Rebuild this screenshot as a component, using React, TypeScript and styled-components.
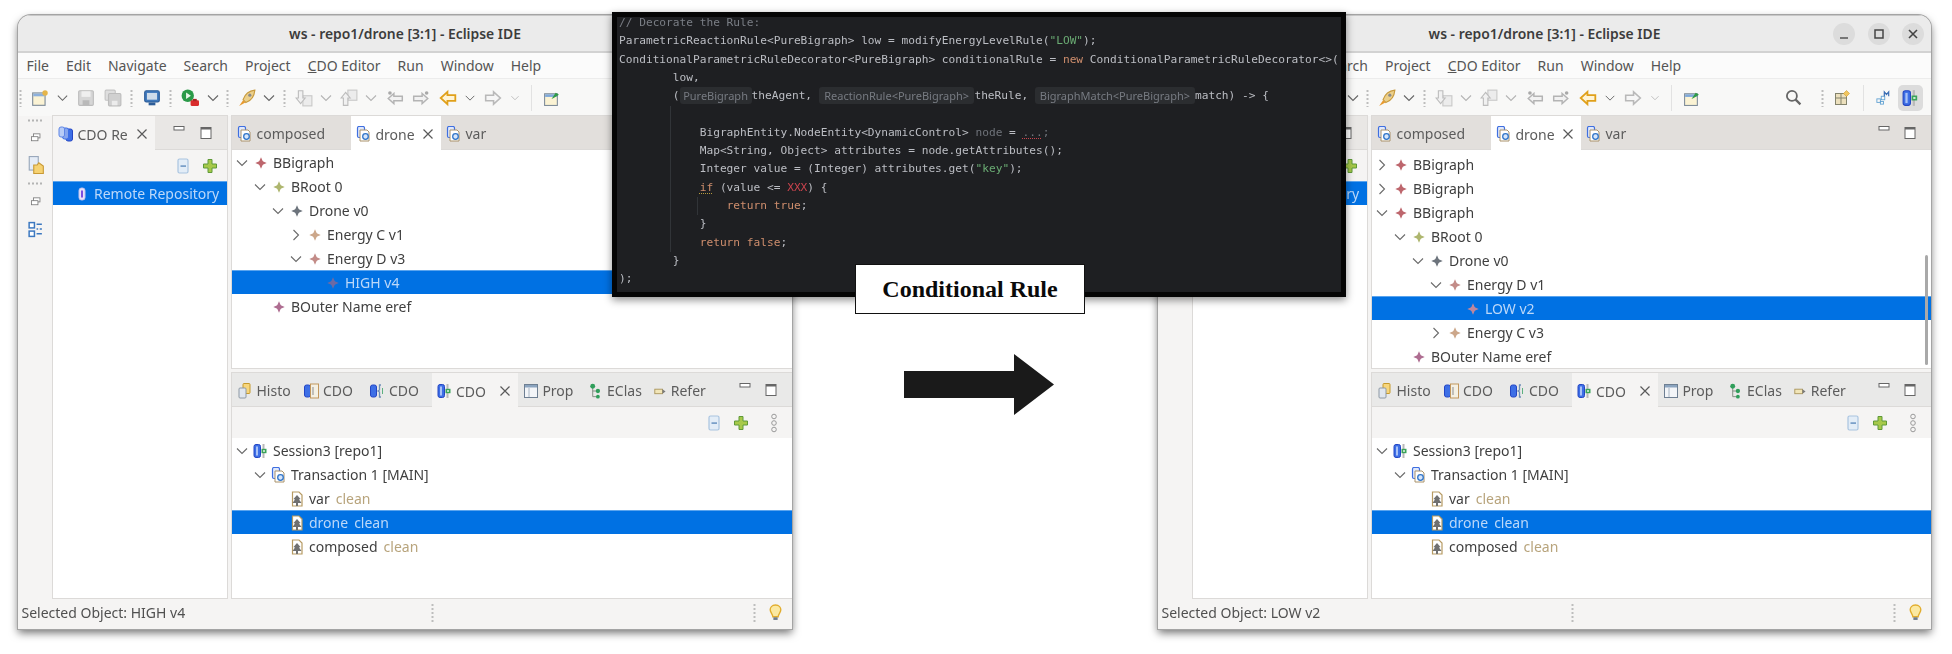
import React from 'react';
import styled, { createGlobalStyle } from 'styled-components';

const GlobalStyle = createGlobalStyle`
  html, body { margin: 0; padding: 0; background: #fff; }
  body { font-family: "Noto Sans", "Open Sans", sans-serif; }
  * { box-sizing: border-box; }
`;

const Stage = styled.div`
  position: relative;
  width: 1952px;
  height: 654px;
  overflow: hidden;
  display: flex;
  align-items: flex-start;
  padding: 15px 0 0 18px;
  background: #fff;
`;

const Window = styled.section<{ $w: number }>`
  flex: 0 0 ${(p) => p.$w}px;
  width: ${(p) => p.$w}px;
  height: 614px;
  display: flex;
  flex-direction: column;
  background: #f5f4f3;
  border-radius: 13px 13px 0 0;
  overflow: hidden;
  color: #444;
  font-size: 14px;
  filter: blur(0.45px);
  box-shadow: 0 0 0 1px #a4a4a4, 0 4px 9px rgba(0, 0, 0, 0.55);
`;

const TitleBar = styled.header`
  flex: 0 0 38px;
  display: grid;
  grid-template-columns: 1fr auto 1fr;
  align-items: center;
  background: #ebebeb;
  border-bottom: 2px solid #d2d2d2;
  border-top: 1px solid #c8c8c8;
`;

const Title = styled.div`
  grid-column: 2;
  font-weight: 600;
  font-size: 13.9px;
  color: #3c3c3c;
  white-space: nowrap;
`;

const WinButtons = styled.div`
  grid-column: 3;
  justify-self: end;
  display: flex;
  gap: 12.4px;
  padding-right: 7px;
`;

const WinButton = styled.span`
  width: 22px;
  height: 22px;
  border-radius: 50%;
  background: #dcdcdc;
  display: flex;
  align-items: center;
  justify-content: center;
`;

const MenuBar = styled.nav`
  flex: 0 0 26px;
  display: flex;
  align-items: center;
  gap: 17px;
  padding-left: 8.5px;
  background: #fbfbfb;
  border-bottom: 1px solid #ececec;
  color: #555;
  white-space: nowrap;
`;

const Mnemonic = styled.span`
  text-decoration: underline;
`;

const ToolBar = styled.div`
  flex: 0 0 37px;
  display: flex;
  align-items: center;
  background: #f8f8f7;
`;

const ToolSlot = styled.span<{ $w: number; $active?: boolean }>`
  flex: 0 0 ${(p) => p.$w}px;
  width: ${(p) => p.$w}px;
  height: 26px;
  display: flex;
  align-items: center;
  justify-content: center;
  border-radius: 5px;
  background: ${(p) => (p.$active ? '#dcdcdc' : 'transparent')};
`;

const ToolDivider = styled.span`
  width: 1px;
  height: 26px;
  background: #e2e2e2;
`;

const ToolSpacer = styled.span<{ $w: number }>`
  flex: 0 0 ${(p) => p.$w}px;
`;

const Workbench = styled.div`
  flex: 1;
  min-height: 0;
  display: flex;
`;

const TrimBar = styled.aside`
  flex: 0 0 35px;
  display: flex;
  flex-direction: column;
  align-items: center;
  padding-top: 1px;
`;

const TrimItem = styled.span<{ $h: number }>`
  flex: 0 0 ${(p) => p.$h}px;
  display: flex;
  align-items: center;
  justify-content: center;
`;

const ViewColumn = styled.div`
  flex: 0 0 173.5px;
  display: flex;
  margin-right: 5.5px;
`;

const Stack = styled.div<{ $h?: number }>`
  display: flex;
  flex-direction: column;
  flex: ${(p) => (p.$h ? `0 0 ${p.$h}px` : '1')};
  min-width: 0;
  min-height: 0;
  background: #fff;
  box-shadow: 0 0 0 1px #dcdad8;
`;

const EditorColumn = styled.div`
  flex: 1;
  min-width: 0;
  display: flex;
  flex-direction: column;
  gap: 5px;
`;

const TabBar = styled.div<{ $bg: string }>`
  flex: 0 0 34px;
  display: flex;
  background: ${(p) => p.$bg};
  border-bottom: 1px solid #dcdad8;
`;

const Tab = styled.div<{ $w: number; $bg?: string }>`
  flex: 0 0 ${(p) => p.$w}px;
  display: flex;
  align-items: center;
  padding: 2.5px 6px 0 5px;
  margin-bottom: ${(p) => (p.$bg ? '-1px' : '0')};
  background: ${(p) => p.$bg || 'transparent'};
  color: #5c5c5c;
  white-space: nowrap;
  overflow: hidden;
`;

const TabLabel = styled.span`
  margin-left: 3.5px;
`;

const TabClose = styled.span`
  margin-left: auto;
  display: flex;
`;

const ViewControls = styled.div`
  margin-left: auto;
  display: flex;
  align-items: center;
  gap: 10.5px;
  padding-right: 13px;
`;

const ViewToolBar = styled.div`
  flex: 0 0 31px;
  display: flex;
  align-items: center;
  justify-content: flex-end;
  background: #f5f4f3;
`;

const ViewTool = styled.span<{ $w: number }>`
  flex: 0 0 ${(p) => p.$w}px;
  display: flex;
  justify-content: center;
`;

const Tree = styled.div<{ $top: number }>`
  position: relative;
  flex: 1;
  min-height: 0;
  padding-top: ${(p) => p.$top}px;
  background: #fff;
  overflow: hidden;
`;

const Row = styled.div<{ $level: number; $selected?: boolean }>`
  height: 24px;
  display: flex;
  align-items: center;
  padding-left: ${(p) => 2 + p.$level * 18}px;
  white-space: nowrap;
  color: ${(p) => (p.$selected ? '#bcd8f9' : '#3f3f3f')};
  background: ${(p) => (p.$selected ? '#0071e3' : 'transparent')};
  border-top: 1px solid ${(p) => (p.$selected ? '#5aa4ee' : 'transparent')};
`;

const ChevronSlot = styled.span`
  flex: 0 0 16px;
  display: flex;
  justify-content: center;
`;

const IconSlot = styled.span`
  flex: 0 0 16px;
  margin-left: 3px;
  display: flex;
  justify-content: center;
  align-items: center;
`;

const RowLabel = styled.span`
  margin-left: 4px;
`;

const Dirty = styled.span<{ $selected?: boolean }>`
  margin-left: 6px;
  color: ${(p) => (p.$selected ? '#bcd8f9' : '#b8a47c')};
`;

const ScrollThumb = styled.span`
  position: absolute;
  top: 105px;
  right: 3px;
  bottom: 3px;
  width: 3px;
  border-radius: 2px;
  background: #a9a9a9;
`;

const StatusBar = styled.footer`
  flex: 0 0 31px;
  display: flex;
  align-items: center;
  padding: 0 0 2px 3.5px;
  color: #505050;
`;

const StatusText = styled.span`
  flex: 0 0 409px;
  white-space: nowrap;
`;

const StatusGap = styled.span<{ $w: number }>`
  flex: 0 0 ${(p) => p.$w}px;
`;

const Middle = styled.div`
  flex: 0 0 366px;
  padding: 339px 0 0 112px;
`;

const ArrowMark = styled.svg`
  display: block;
`;

const CodeBox = styled.div`
  position: absolute;
  left: 612px;
  top: 12px;
  width: 734px;
  height: 285px;
  background: #1e1f22;
  border: 5px solid #050505;
  padding-left: 2px;
  overflow: hidden;
  box-shadow: 0 3px 8px rgba(0, 0, 0, 0.45);
  font-family: "DejaVu Sans Mono", "Liberation Mono", monospace;
  font-size: 11.18px;
  color: #bcbec4;
`;

const CodeBody = styled.div`
  margin-top: -3px;
  filter: blur(0.4px);
`;

const CodeLine = styled.div`
  height: 18.3px;
  line-height: 18.3px;
  white-space: pre;
`;

const Comment = styled.span`
  color: #7a7e85;
`;

const Str = styled.span`
  color: #6aab73;
`;

const Keyword = styled.span`
  color: #cf8e6d;
`;

const Wrong = styled.span`
  color: #c9434d;
`;

const Muted = styled.span`
  color: #6f737a;
`;

const Squiggle = styled.span<{ $color: string }>`
  text-decoration: underline dotted ${(p) => p.$color};
  text-underline-offset: 2px;
`;

const InlayHint = styled.span<{ $w: number }>`
  display: inline-block;
  width: ${(p) => p.$w}px;
  height: 17px;
  line-height: 17px;
  text-align: center;
  vertical-align: top;
  border-radius: 3px;
  background: #2b2d30;
  color: #777b82;
  font-family: "Noto Sans", sans-serif;
  font-size: 11px;
`;

const IndentGuide = styled.span<{ $left: number; $top: number; $h: number }>`
  position: absolute;
  left: ${(p) => p.$left}px;
  top: ${(p) => p.$top}px;
  width: 1px;
  height: ${(p) => p.$h}px;
  background: #313438;
`;

const RuleLabel = styled.div`
  position: absolute;
  left: 855px;
  top: 264px;
  width: 230px;
  height: 50px;
  display: flex;
  align-items: center;
  justify-content: center;
  background: #fff;
  border: 1px solid #111;
  font-family: "Liberation Serif", "Times New Roman", serif;
  font-weight: 700;
  font-size: 24px;
  color: #0a0a0a;
`;

type IconName =
  | 'new' | 'save' | 'saveAll' | 'monitor' | 'run' | 'rocket' | 'annotDown' | 'annotUp'
  | 'prevEdit' | 'nextEdit' | 'back' | 'forward' | 'newWin' | 'search' | 'persp' | 'model'
  | 'session' | 'tx' | 'histo' | 'cdoDoc' | 'cdoBrace' | 'prop' | 'eclass' | 'refer'
  | 'repos' | 'repo' | 'resource' | 'collapse' | 'plus' | 'bulb' | 'restore' | 'folderDoc' | 'outline';

const IconArt: React.FC<{ name: IconName }> = ({ name }) => {
  switch (name) {
    case 'new':
      return (
        <>
          <rect x="1.5" y="3.5" width="11" height="11" fill="#fbf3d4" stroke="#7d8b99" />
          <rect x="2" y="4" width="10" height="2.5" fill="#8db0dc" />
          <circle cx="12.5" cy="3.5" r="2.4" fill="#e5b548" />
        </>
      );
    case 'save':
      return (
        <>
          <rect x="1.5" y="1.5" width="13" height="13" rx="1" fill="#d6d6d6" stroke="#bcbcbc" />
          <rect x="4" y="2" width="8" height="5" fill="#efefef" />
          <rect x="5" y="10" width="6" height="4.5" fill="#b9b9b9" />
        </>
      );
    case 'saveAll':
      return (
        <>
          <rect x="1" y="1" width="9" height="9" rx="1" fill="#dedede" stroke="#c4c4c4" />
          <rect x="4" y="4" width="11" height="11" rx="1" fill="#d0d0d0" stroke="#bcbcbc" />
          <rect x="7" y="10.5" width="5" height="4" fill="#ececec" />
        </>
      );
    case 'monitor':
      return (
        <>
          <rect x="1.5" y="1.5" width="13" height="10" rx="1.5" fill="#3f78bb" stroke="#2d5d98" />
          <rect x="3.5" y="3.5" width="9" height="6" fill="#cfdcea" />
          <rect x="5" y="12" width="6" height="2.5" fill="#2d5d98" />
        </>
      );
    case 'run':
      return (
        <>
          <circle cx="6" cy="6" r="5.5" fill="#2b9a48" />
          <path d="M4.5 3.2 L8.8 6 L4.5 8.8Z" fill="#e9f7e9" />
          <rect x="8.5" y="10" width="7.5" height="5" rx="1" fill="#d92c2c" />
          <rect x="10.5" y="8.8" width="3.5" height="2" fill="#a92424" />
        </>
      );
    case 'rocket':
      return (
        <>
          <path d="M15 1 C10 1.5 6 5 4.5 9.5 L7 12 C11.5 10.5 14.5 6 15 1Z" fill="#ecd08b" stroke="#c89b3e" />
          <circle cx="10.5" cy="5.5" r="1.4" fill="#8b8b8b" />
          <path d="M4.5 10 L1 15 L6.5 12Z" fill="#e79a2f" />
        </>
      );
    case 'annotDown':
      return (
        <>
          <rect x="7" y="6" width="8" height="9" fill="#ececec" stroke="#c9c9c9" />
          <path d="M3 1.5 H7 V8 H9 L5 13 L1 8 H3Z" fill="#f1f1f1" stroke="#bdbdbd" />
        </>
      );
    case 'annotUp':
      return (
        <>
          <rect x="7" y="1" width="8" height="9" fill="#ececec" stroke="#c9c9c9" />
          <path d="M5 3 L9 8 H7 V14.5 H3 V8 H1Z" fill="#f1f1f1" stroke="#bdbdbd" />
        </>
      );
    case 'prevEdit':
      return (
        <>
          <path d="M7 4 L2 8.5 L7 13 V10.5 H14.5 V6.5 H7Z" fill="#f2f2f2" stroke="#b4b4b4" strokeWidth="1.3" />
          <circle cx="3.5" cy="3.5" r="1.6" fill="#a9a9a9" />
        </>
      );
    case 'nextEdit':
      return (
        <>
          <path d="M9 4 L14 8.5 L9 13 V10.5 H1.5 V6.5 H9Z" fill="#f2f2f2" stroke="#b4b4b4" strokeWidth="1.3" />
          <circle cx="13" cy="3.5" r="1.6" fill="#a9a9a9" />
        </>
      );
    case 'back':
      return <path d="M7.5 2.5 L1.5 8 L7.5 13.5 V10.5 H14.5 V5.5 H7.5Z" fill="#fff4d6" stroke="#e0a01a" strokeWidth="1.6" />;
    case 'forward':
      return <path d="M8.5 2.5 L14.5 8 L8.5 13.5 V10.5 H1.5 V5.5 H8.5Z" fill="#f6f6f6" stroke="#b9b9b9" strokeWidth="1.4" />;
    case 'newWin':
      return (
        <>
          <rect x="1.5" y="4" width="12" height="11" fill="#fbf3d4" stroke="#7d8b99" />
          <rect x="2" y="4.5" width="11" height="2.5" fill="#7fa8da" />
          <path d="M8 9 L12 3 L15 5 L10 8Z" fill="#2f9a46" />
        </>
      );
    case 'search':
      return (
        <>
          <circle cx="6.5" cy="6.5" r="4.7" fill="none" stroke="#666" strokeWidth="1.7" />
          <path d="M10 10 L14.5 14.5" stroke="#666" strokeWidth="2.1" />
        </>
      );
    case 'persp':
      return (
        <>
          <rect x="1.5" y="3.5" width="11" height="11" fill="#ece0bd" stroke="#83836c" />
          <path d="M1.5 8 H12.5 M7 3.5 V14.5" stroke="#83836c" />
          <path d="M12.5 0.5 L15.5 3.5 L12.5 6.5 L9.5 3.5Z" fill="#f1c65e" stroke="#cf9c2e" strokeWidth="0.6" />
        </>
      );
    case 'model':
      return (
        <>
          <rect x="1" y="9" width="4" height="4" fill="none" stroke="#5ea0d2" />
          <rect x="5" y="12" width="3.5" height="3" fill="none" stroke="#5ea0d2" />
          <rect x="6" y="6" width="4" height="4" fill="none" stroke="#5ea0d2" />
          <path d="M9.5 6 V1 L12 4 L14.5 1 V6" fill="none" stroke="#3c6fb5" strokeWidth="1.4" />
        </>
      );
    case 'session':
      return (
        <>
          <rect x="1" y="1.5" width="6.5" height="13" rx="2" fill="#3d6fe6" stroke="#2446c4" />
          <rect x="3" y="3.5" width="2" height="9" fill="#a9c2f7" />
          <rect x="9.5" y="1" width="2" height="14" fill="#b9b9b9" />
          <rect x="8.5" y="5.8" width="5" height="4.4" fill="#3aa35a" />
          <rect x="10" y="7.2" width="2" height="1.6" fill="#d8f0dc" />
        </>
      );
    case 'tx':
      return (
        <>
          <rect x="1.5" y="0.5" width="7" height="11" rx="1.5" fill="#dfe8fb" stroke="#3f6fe0" strokeWidth="1.2" />
          <path d="M4 4 H11 L13 6 V15 H4Z" fill="#fff" stroke="#a9926a" />
          <circle cx="9.5" cy="10.5" r="2.8" fill="#d5e5fb" stroke="#2f74c8" strokeWidth="1.3" />
        </>
      );
    case 'histo':
      return (
        <>
          <rect x="6" y="0.5" width="7" height="10" rx="1" fill="#f7d67c" stroke="#c69a2c" />
          <rect x="2" y="5" width="7" height="10" rx="1" fill="#e1e7ee" stroke="#8d98a5" />
        </>
      );
    case 'cdoDoc':
      return (
        <>
          <rect x="0.5" y="2" width="6" height="12" rx="2" fill="#3d6fe6" stroke="#2446c4" />
          <rect x="6.5" y="1" width="8" height="14" fill="#f4f0e4" stroke="#c2975c" />
          <path d="M9 4 V12" stroke="#8d8d8d" />
        </>
      );
    case 'cdoBrace':
      return (
        <>
          <rect x="0.5" y="2" width="6" height="12" rx="2" fill="#3d6fe6" stroke="#2446c4" />
          <path d="M11 2 H9.5 V7 L8 8 L9.5 9 V14 H11" fill="none" stroke="#6f8fb8" strokeWidth="1.3" />
          <path d="M12.5 5 V11" stroke="#5db080" />
        </>
      );
    case 'prop':
      return (
        <>
          <rect x="1.5" y="1.5" width="13" height="13" fill="#f3f5f8" stroke="#6e7f92" />
          <rect x="2" y="2" width="12" height="2.5" fill="#8ba4bf" />
          <path d="M6 5 V14" stroke="#a9b6c4" />
        </>
      );
    case 'eclass':
      return (
        <>
          <path d="M5 2 V14 H10 M5 8 H10" fill="none" stroke="#7f8b7f" />
          <circle cx="5" cy="3" r="2.6" fill="#2f9e5a" />
          <circle cx="10.5" cy="8" r="2.3" fill="#2f9e5a" />
          <circle cx="10.5" cy="14" r="2" fill="#2f9e5a" />
        </>
      );
    case 'refer':
      return (
        <>
          <rect x="2" y="6" width="8.5" height="5" fill="#f2e6b8" stroke="#a9945a" />
          <path d="M10.5 6 L14 8.5 L10.5 11Z" fill="#7b7b7b" />
        </>
      );
    case 'repos':
      return (
        <>
          <rect x="8" y="3" width="6.5" height="12" rx="2" fill="#3d6fe6" stroke="#2446c4" />
          <rect x="4.5" y="2" width="6" height="11" rx="2" fill="#86a5ee" stroke="#3d6fe6" />
          <rect x="1" y="1" width="5.5" height="10" rx="2" fill="#b8ccf6" stroke="#5d85e6" />
        </>
      );
    case 'repo':
      return (
        <>
          <rect x="5" y="2" width="6" height="12" rx="2.5" fill="#e8e2f9" stroke="#c3c3ef" />
          <rect x="7" y="4.5" width="2" height="7" fill="#7b4fe0" />
        </>
      );
    case 'resource':
      return (
        <>
          <path d="M3.5 1 H10 L13 4 V15 H3.5Z" fill="#fff" stroke="#b69a62" strokeWidth="1.2" />
          <path d="M8 4 L11.5 8 L10 8.5 L12.5 12 H3.5 L6 8.5 L4.5 8Z" fill="#707070" />
          <rect x="7" y="12" width="2" height="3" fill="#707070" />
        </>
      );
    case 'collapse':
      return (
        <>
          <rect x="3" y="1" width="10" height="14" rx="1.5" fill="#e3edf7" stroke="#a9c4e0" strokeWidth="1.2" />
          <rect x="5.5" y="7.3" width="5.5" height="1.6" fill="#6f97c4" />
        </>
      );
    case 'plus':
      return <path d="M6 1.5 H10 V6 H14.5 V10 H10 V14.5 H6 V10 H1.5 V6 H6Z" fill="#a7c94a" stroke="#5f9a38" />;
    case 'bulb':
      return (
        <>
          <path d="M8 1 C4.5 1 3 3.5 3 5.5 C3 8 5.5 9.5 5.5 12 H10.5 C10.5 9.5 13 8 13 5.5 C13 3.5 11.5 1 8 1Z" fill="#fbe9a2" stroke="#e2ad2e" strokeWidth="1.3" />
          <rect x="6" y="12.5" width="4" height="2.5" fill="#6f7c8c" />
        </>
      );
    case 'restore':
      return (
        <>
          <rect x="5.5" y="3.5" width="8" height="5" fill="#fff" stroke="#777" />
          <rect x="3" y="7" width="8" height="5" fill="#fff" stroke="#777" />
        </>
      );
    case 'folderDoc':
      return (
        <>
          <rect x="2" y="0.5" width="8" height="12" fill="#e5ecf6" stroke="#9aa8bb" />
          <path d="M6 8 H9 L10.5 6 L14.5 9 V15.5 H6Z" fill="#f6d272" stroke="#c99a36" />
        </>
      );
    case 'outline':
      return (
        <>
          <rect x="2" y="1.5" width="5" height="5" fill="#fff" stroke="#3c78c0" strokeWidth="1.4" />
          <rect x="2" y="9.5" width="5" height="5" fill="#fff" stroke="#3c78c0" strokeWidth="1.4" />
          <path d="M9 3 H14 M9 7.5 H10.5 M12 7.5 H14 M9 12 H14" stroke="#3c78c0" strokeWidth="1.4" />
        </>
      );
    default:
      return null;
  }
};

const Icon: React.FC<{ name: IconName; size?: number }> = ({ name, size = 16 }) => (
  <svg width={size} height={size} viewBox="0 0 16 16">
    <IconArt name={name} />
  </svg>
);

const Node: React.FC<{ color: string }> = ({ color }) => (
  <svg width="14" height="14" viewBox="0 0 16 16" opacity="0.88">
    <path d="M8 1.5 L10 6 L14.5 8 L10 10 L8 14.5 L6 10 L1.5 8 L6 6Z" fill={color} />
    <circle cx="8" cy="8" r="2.6" fill={color} />
  </svg>
);

const Chevron: React.FC<{ dir: 'down' | 'right'; color?: string }> = ({ dir, color = '#6a6a6a' }) => (
  <svg width="14" height="14" viewBox="0 0 14 14">
    <path d={dir === 'down' ? 'M2 4.5 L7 9.5 L12 4.5' : 'M4.5 2 L9.5 7 L4.5 12'} fill="none" stroke={color} strokeWidth="1.1" />
  </svg>
);

const CloseX: React.FC = () => (
  <svg width="14" height="14" viewBox="0 0 14 14">
    <path d="M2.5 2.5 L11.5 11.5 M11.5 2.5 L2.5 11.5" stroke="#5a5a5a" strokeWidth="1.2" />
  </svg>
);

const MinMark: React.FC = () => (
  <svg width="16" height="16" viewBox="0 0 16 16">
    <rect x="3" y="1.5" width="10" height="3.5" fill="#fff" stroke="#666" />
  </svg>
);

const MaxMark: React.FC = () => (
  <svg width="16" height="16" viewBox="0 0 16 16">
    <rect x="3" y="2.5" width="10" height="11" fill="#fff" stroke="#666" />
    <rect x="3" y="2.5" width="10" height="2" fill="#666" />
  </svg>
);

const Grip: React.FC<{ tall?: boolean }> = ({ tall }) => (
  <svg width="3" height={tall ? 20 : 18} viewBox={`0 0 3 ${tall ? 20 : 18}`}>
    {[1, 5, 9, 13, 17].map((y) => (
      <rect key={y} x="0.5" y={y} width="2" height="2" fill="#bdbdbd" />
    ))}
  </svg>
);

const TrimGrip: React.FC = () => (
  <svg width="18" height="3" viewBox="0 0 18 3">
    {[1, 5, 9, 13].map((x) => (
      <rect key={x} x={x} y="0.5" width="2" height="2" fill="#b4b4b4" />
    ))}
  </svg>
);

const ChainDots: React.FC = () => (
  <svg width="8" height="20" viewBox="0 0 8 20">
    {[3.5, 10, 16.5].map((y) => (
      <circle key={y} cx="4" cy={y} r="2.3" fill="none" stroke="#9a9a9a" />
    ))}
  </svg>
);

type ToolItem = { w: number; icon?: IconName; chevron?: boolean; dark?: boolean; grip?: boolean; divider?: boolean };

const toolItems: ToolItem[] = [
  { w: 5, grip: true },
  { w: 33, icon: 'new' },
  { w: 13, chevron: true, dark: true },
  { w: 34, icon: 'save' },
  { w: 20, icon: 'saveAll' },
  { w: 17, grip: true },
  { w: 24, icon: 'monitor' },
  { w: 12, grip: true },
  { w: 28, icon: 'run' },
  { w: 17, chevron: true, dark: true },
  { w: 12, grip: true },
  { w: 28, icon: 'rocket' },
  { w: 16, chevron: true, dark: true },
  { w: 14, grip: true },
  { w: 26, icon: 'annotDown' },
  { w: 18, chevron: true },
  { w: 28, icon: 'annotUp' },
  { w: 16, chevron: true },
  { w: 31, icon: 'prevEdit' },
  { w: 22, icon: 'nextEdit' },
  { w: 32, icon: 'back' },
  { w: 12, chevron: true, dark: true },
  { w: 34, icon: 'forward' },
  { w: 10, chevron: true },
  { w: 23, divider: true },
  { w: 17, icon: 'newWin' },
];

type TreeEntry = {
  label: string;
  level: number;
  chevron?: 'down' | 'right';
  color?: string;
  icon?: IconName;
  dirty?: boolean;
  selected?: boolean;
};

const BIGRAPH = '#b5525a';
const ROOT = '#a3ad5c';
const DRONE = '#59616b';
const ENERGY_C = '#c59b7b';
const ENERGY_D = '#bb7d78';
const OUTER = '#a35a82';
const VALUE = '#d88a94';

const leftTree: TreeEntry[] = [
  { label: 'BBigraph', level: 0, chevron: 'down', color: BIGRAPH },
  { label: 'BRoot 0', level: 1, chevron: 'down', color: ROOT },
  { label: 'Drone v0', level: 2, chevron: 'down', color: DRONE },
  { label: 'Energy C v1', level: 3, chevron: 'right', color: ENERGY_C },
  { label: 'Energy D v3', level: 3, chevron: 'down', color: ENERGY_D },
  { label: 'HIGH v4', level: 4, color: '#7d6a9c', selected: true },
  { label: 'BOuter Name eref', level: 1, color: OUTER },
];

const rightTree: TreeEntry[] = [
  { label: 'BBigraph', level: 0, chevron: 'right', color: BIGRAPH },
  { label: 'BBigraph', level: 0, chevron: 'right', color: BIGRAPH },
  { label: 'BBigraph', level: 0, chevron: 'down', color: BIGRAPH },
  { label: 'BRoot 0', level: 1, chevron: 'down', color: ROOT },
  { label: 'Drone v0', level: 2, chevron: 'down', color: DRONE },
  { label: 'Energy D v1', level: 3, chevron: 'down', color: ENERGY_D },
  { label: 'LOW v2', level: 4, color: VALUE, selected: true },
  { label: 'Energy C v3', level: 3, chevron: 'right', color: ENERGY_C },
  { label: 'BOuter Name eref', level: 1, color: OUTER },
];

const sessionTree: TreeEntry[] = [
  { label: 'Session3 [repo1]', level: 0, chevron: 'down', icon: 'session' },
  { label: 'Transaction 1 [MAIN]', level: 1, chevron: 'down', icon: 'tx' },
  { label: 'var', level: 2, icon: 'resource', dirty: true },
  { label: 'drone', level: 2, icon: 'resource', dirty: true, selected: true },
  { label: 'composed', level: 2, icon: 'resource', dirty: true },
];

const bottomTabs: { label: string; icon: IconName; w: number; active?: boolean }[] = [
  { label: 'Histo', icon: 'histo', w: 66.5 },
  { label: 'CDO', icon: 'cdoDoc', w: 66 },
  { label: 'CDO', icon: 'cdoBrace', w: 67 },
  { label: 'CDO', icon: 'session', w: 86.4, active: true },
  { label: 'Prop', icon: 'prop', w: 65.6 },
  { label: 'EClas', icon: 'eclass', w: 64.4 },
  { label: 'Refer', icon: 'refer', w: 64 },
];

const TreeRows: React.FC<{ rows: TreeEntry[] }> = ({ rows }) => (
  <>
    {rows.map((row, i) => (
      <Row key={i} $level={row.level} $selected={row.selected}>
        <ChevronSlot>{row.chevron && <Chevron dir={row.chevron} />}</ChevronSlot>
        <IconSlot>{row.icon ? <Icon name={row.icon} /> : <Node color={row.color || DRONE} />}</IconSlot>
        <RowLabel>{row.label}</RowLabel>
        {row.dirty && <Dirty $selected={row.selected}>clean</Dirty>}
      </Row>
    ))}
  </>
);

const EclipseWindow: React.FC<{
  w: number;
  tree: TreeEntry[];
  treeTop: number;
  status: string;
  scrolled?: boolean;
}> = ({ w, tree, treeTop, status, scrolled }) => (
  <Window $w={w}>
    <TitleBar>
      <Title>ws - repo1/drone [3:1] - Eclipse IDE</Title>
      <WinButtons>
        <WinButton>
          <svg width="12" height="12" viewBox="0 0 12 12">
            <path d="M2 10 H10" stroke="#555" strokeWidth="1.6" />
          </svg>
        </WinButton>
        <WinButton>
          <svg width="12" height="12" viewBox="0 0 12 12">
            <rect x="2" y="2" width="8" height="8" fill="none" stroke="#444" strokeWidth="1.5" />
          </svg>
        </WinButton>
        <WinButton>
          <svg width="12" height="12" viewBox="0 0 12 12">
            <path d="M2 2 L10 10 M10 2 L2 10" stroke="#444" strokeWidth="1.6" />
          </svg>
        </WinButton>
      </WinButtons>
    </TitleBar>
    <MenuBar>
      <span>File</span>
      <span>Edit</span>
      <span>Navigate</span>
      <span>Search</span>
      <span>Project</span>
      <span>
        <Mnemonic>C</Mnemonic>DO Editor
      </span>
      <span>Run</span>
      <span>Window</span>
      <span>Help</span>
    </MenuBar>
    <ToolBar>
      {toolItems.map((item, i) => (
        <ToolSlot key={i} $w={item.w}>
          {item.icon && <Icon name={item.icon} size={18} />}
          {item.chevron && <Chevron dir="down" color={item.dark ? '#666' : '#b4b4b4'} />}
          {item.grip && <Grip />}
          {item.divider && <ToolDivider />}
        </ToolSlot>
      ))}
      <ToolSpacer $w={80} />
      <ToolSlot $w={26}>
        <Icon name="search" size={17} />
      </ToolSlot>
      <ToolSpacer $w={4} />
      <ToolSlot $w={24}>
        <Grip />
      </ToolSlot>
      <ToolSlot $w={16}>
        <Icon name="persp" size={18} />
      </ToolSlot>
      <ToolSlot $w={26}>
        <ToolDivider />
      </ToolSlot>
      <ToolSlot $w={14}>
        <Icon name="model" size={18} />
      </ToolSlot>
      <ToolSpacer $w={8} />
      <ToolSlot $w={25} $active>
        <Icon name="session" size={18} />
      </ToolSlot>
    </ToolBar>
    <Workbench>
      <TrimBar>
        <TrimItem $h={6}>
          <TrimGrip />
        </TrimItem>
        <TrimItem $h={29}>
          <Icon name="restore" size={13} />
        </TrimItem>
        <TrimItem $h={25}>
          <Icon name="folderDoc" size={18} />
        </TrimItem>
        <TrimItem $h={13}>
          <TrimGrip />
        </TrimItem>
        <TrimItem $h={22}>
          <Icon name="restore" size={13} />
        </TrimItem>
        <TrimItem $h={34}>
          <Icon name="outline" size={17} />
        </TrimItem>
      </TrimBar>
      <ViewColumn>
        <Stack>
          <TabBar $bg="#e9e7e5">
            <Tab $w={102} $bg="#f5f4f3">
              <Icon name="repos" />
              <TabLabel>CDO Re</TabLabel>
              <TabClose>
                <CloseX />
              </TabClose>
            </Tab>
            <ViewControls>
              <MinMark />
              <MaxMark />
            </ViewControls>
          </TabBar>
          <ViewToolBar>
            <ViewTool $w={20}>
              <Icon name="collapse" />
            </ViewTool>
            <ViewTool $w={34}>
              <Icon name="plus" />
            </ViewTool>
          </ViewToolBar>
          <Tree $top={0}>
            <Row $level={0} $selected>
              <ChevronSlot />
              <IconSlot>
                <Icon name="repo" />
              </IconSlot>
              <RowLabel>Remote Repository</RowLabel>
            </Row>
          </Tree>
        </Stack>
      </ViewColumn>
      <EditorColumn>
        <Stack $h={252}>
          <TabBar $bg="#e2dfdc">
            <Tab $w={119}>
              <Icon name="tx" />
              <TabLabel>composed</TabLabel>
            </Tab>
            <Tab $w={90} $bg="#fff">
              <Icon name="tx" />
              <TabLabel>drone</TabLabel>
              <TabClose>
                <CloseX />
              </TabClose>
            </Tab>
            <Tab $w={80}>
              <Icon name="tx" />
              <TabLabel>var</TabLabel>
            </Tab>
            <ViewControls>
              <MinMark />
              <MaxMark />
            </ViewControls>
          </TabBar>
          <Tree $top={treeTop}>
            <TreeRows rows={tree} />
            {scrolled && <ScrollThumb />}
          </Tree>
        </Stack>
        <Stack>
          <TabBar $bg="#e9e9e8">
            {bottomTabs.map((tab, i) => (
              <Tab key={i} $w={tab.w} $bg={tab.active ? '#f5f4f3' : undefined}>
                <Icon name={tab.icon} />
                <TabLabel>{tab.label}</TabLabel>
                {tab.active && (
                  <TabClose>
                    <CloseX />
                  </TabClose>
                )}
              </Tab>
            ))}
            <ViewControls>
              <MinMark />
              <MaxMark />
            </ViewControls>
          </TabBar>
          <ViewToolBar>
            <ViewTool $w={26}>
              <Icon name="collapse" />
            </ViewTool>
            <ViewTool $w={28}>
              <Icon name="plus" />
            </ViewTool>
            <ViewTool $w={37}>
              <ChainDots />
            </ViewTool>
          </ViewToolBar>
          <Tree $top={0}>
            <TreeRows rows={sessionTree} />
          </Tree>
        </Stack>
      </EditorColumn>
    </Workbench>
    <StatusBar>
      <StatusText>{status}</StatusText>
      <Grip tall />
      <StatusGap $w={319} />
      <Grip tall />
      <StatusGap $w={11} />
      <Icon name="bulb" size={17} />
    </StatusBar>
  </Window>
);

const CodePanel: React.FC = () => (
  <CodeBox>
    <IndentGuide $left={53} $top={89} $h={146} />
    <IndentGuide $left={80} $top={180} $h={18} />
    <CodeBody>
      <CodeLine>
        <Comment>// Decorate the Rule:</Comment>
      </CodeLine>
      <CodeLine>
        {'ParametricReactionRule<PureBigraph> low = modifyEnergyLevelRule('}
        <Str>"LOW"</Str>
        {');'}
      </CodeLine>
      <CodeLine>
        {'ConditionalParametricRuleDecorator<PureBigraph> conditionalRule = '}
        <Keyword>new</Keyword>
        {' ConditionalParametricRuleDecorator<>('}
      </CodeLine>
      <CodeLine>{'        low,'}</CodeLine>
      <CodeLine>
        {'        ('}
        <InlayHint $w={72}>PureBigraph</InlayHint>
        {'theAgent, '}
        <InlayHint $w={155.6}>{'ReactionRule<PureBigraph>'}</InlayHint>
        {'theRule, '}
        <InlayHint $w={160}>{'BigraphMatch<PureBigraph>'}</InlayHint>
        {'match) -> {'}
      </CodeLine>
      <CodeLine> </CodeLine>
      <CodeLine>
        {'            BigraphEntity.NodeEntity<DynamicControl> '}
        <Muted>node</Muted>
        {' = '}
        <Squiggle $color="#c9434d">
          <Muted>...</Muted>
        </Squiggle>
        <Muted>;</Muted>
      </CodeLine>
      <CodeLine>{'            Map<String, Object> attributes = node.getAttributes();'}</CodeLine>
      <CodeLine>
        {'            Integer value = (Integer) attributes.get('}
        <Str>"key"</Str>
        {');'}
      </CodeLine>
      <CodeLine>
        {'            '}
        <Squiggle $color="#b59a3c">
          <Keyword>if</Keyword>
        </Squiggle>
        {' (value <= '}
        <Wrong>XXX</Wrong>
        {') {'}
      </CodeLine>
      <CodeLine>
        {'                '}
        <Keyword>return true</Keyword>
        {';'}
      </CodeLine>
      <CodeLine>{'            }'}</CodeLine>
      <CodeLine>
        {'            '}
        <Keyword>return false</Keyword>
        {';'}
      </CodeLine>
      <CodeLine>{'        }'}</CodeLine>
      <CodeLine>{');'}</CodeLine>
    </CodeBody>
  </CodeBox>
);

const App: React.FC = () => (
  <Stage>
    <GlobalStyle />
    <EclipseWindow w={774} tree={leftTree} treeTop={0} status="Selected Object: HIGH v4" />
    <Middle>
      <ArrowMark width="150" height="61" viewBox="0 0 150 61">
        <path d="M0 17 H110 V0 L150 30.5 L110 61 V44 H0Z" fill="#1a1a1a" />
      </ArrowMark>
    </Middle>
    <EclipseWindow w={773} tree={rightTree} treeTop={2} status="Selected Object: LOW v2" scrolled />
    <CodePanel />
    <RuleLabel>Conditional Rule</RuleLabel>
  </Stage>
);

export default App;
